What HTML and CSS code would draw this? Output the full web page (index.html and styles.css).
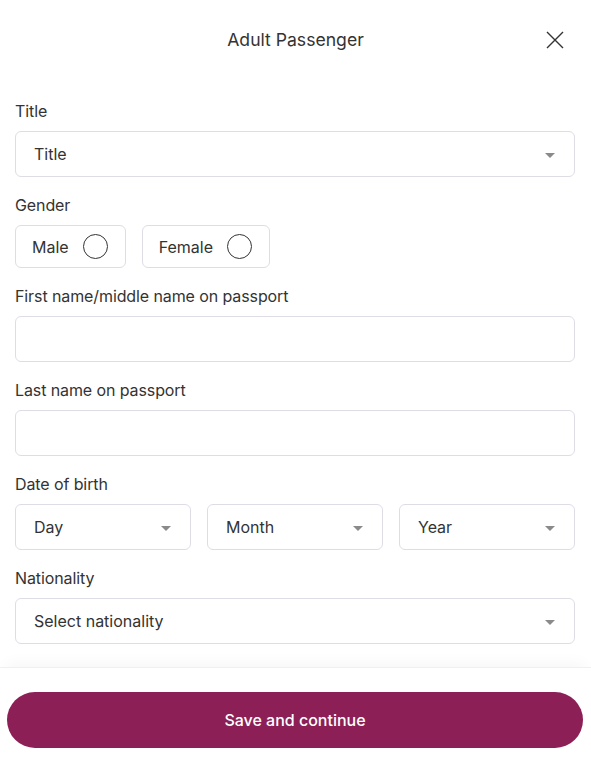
FILE: index.html
```html
<!DOCTYPE html>
<html lang="en">
<head>
<meta charset="utf-8">
<title>Adult Passenger</title>
<link rel="stylesheet" href="styles.css">
</head>
<body>
<div class="sheet">
  <header class="head">
    <h1 class="head-title">Adult Passenger</h1>
    <button class="close" aria-label="Close">
      <svg width="18" height="18" viewBox="0 0 18 18"><path d="M1 1L17 17M17 1L1 17" stroke="#333" stroke-width="1.4" fill="none"/></svg>
    </button>
  </header>
  <form class="form">
    <div class="field">
      <label class="label">Title</label>
      <div class="box select"><span>Title</span><i class="caret"></i></div>
    </div>
    <div class="field">
      <label class="label">Gender</label>
      <div class="radios">
        <div class="radio">Male<span class="dot"></span></div>
        <div class="radio">Female<span class="dot"></span></div>
      </div>
    </div>
    <div class="field">
      <label class="label">First name/middle name on passport</label>
      <div class="box"></div>
    </div>
    <div class="field">
      <label class="label">Last name on passport</label>
      <div class="box"></div>
    </div>
    <div class="field">
      <label class="label">Date of birth</label>
      <div class="dob">
        <div class="box select"><span>Day</span><i class="caret"></i></div>
        <div class="box select"><span>Month</span><i class="caret"></i></div>
        <div class="box select"><span>Year</span><i class="caret"></i></div>
      </div>
    </div>
    <div class="field">
      <label class="label">Nationality</label>
      <div class="box select"><span>Select nationality</span><i class="caret"></i></div>
    </div>
  </form>
  <footer class="foot">
    <button class="save">Save and continue</button>
  </footer>
</div>
</body>
</html>
```
FILE: styles.css
```css
* { box-sizing: border-box; }
html, body { margin: 0; padding: 0; background: #fff; }
body {
  font-family: Inter, "Noto Sans", Roboto, sans-serif;
  color: #333;
  width: 591px;
  height: 759px;
  overflow: hidden;
}
.sheet { display: flex; flex-direction: column; height: 759px; }
.head {
  height: 80px;
  padding-bottom: 1px;
  display: flex;
  align-items: center;
  justify-content: center;
  position: relative;
}
.head-title {
  margin: 0;
  font-size: 17.6px;
  font-weight: 400;
  color: #333;
}
.close {
  position: absolute;
  right: 27px;
  top: 31px;
  width: 18px;
  height: 18px;
  padding: 0;
  border: 0;
  background: none;
  display: block;
}
.close svg { display: block; }
.form {
  padding: 21px 16px 0 15px;
  display: flex;
  flex-direction: column;
  gap: 18px;
  flex: 1;
}
.field { display: flex; flex-direction: column; gap: 10px; }
.label { font-size: 16px; line-height: 20px; color: #333; letter-spacing: -0.1px; }
.box {
  height: 46px;
  border: 1px solid #dedde6;
  border-radius: 6px;
  background: #fff;
}
.select {
  display: flex;
  align-items: center;
  justify-content: space-between;
  padding: 0 19px 0 18px;
  font-size: 16px;
  color: #333;
}
.caret {
  width: 0; height: 0;
  border-left: 5px solid transparent;
  border-right: 5px solid transparent;
  border-top: 5px solid #8a8a8a;
  margin-top: 2px;
}
.radios { display: flex; gap: 16px; }
.radio {
  height: 43px;
  border: 1px solid #dedde6;
  border-radius: 6px;
  display: flex;
  align-items: center;
  gap: 14px;
  padding: 0 17px 0 16px;
  font-size: 16px;
}
.dot {
  width: 25px; height: 25px;
  border: 1px solid #333;
  border-radius: 50%;
}
.dob { display: grid; grid-template-columns: repeat(3, 1fr); gap: 16px; }
.foot {
  height: 92px;
  border-top: 1px solid #f0f0f3;
  box-shadow: 0 -10px 14px -6px rgba(0,0,0,0.035);
  padding: 24px 8px 0 7px;
}
.save {
  width: 100%;
  height: 56px;
  border: 0;
  border-radius: 28px;
  background: #8c1f56;
  color: #fff;
  font-family: Inter, "Noto Sans", Roboto, sans-serif;
  font-size: 16px;
  font-weight: 500;
}
```
